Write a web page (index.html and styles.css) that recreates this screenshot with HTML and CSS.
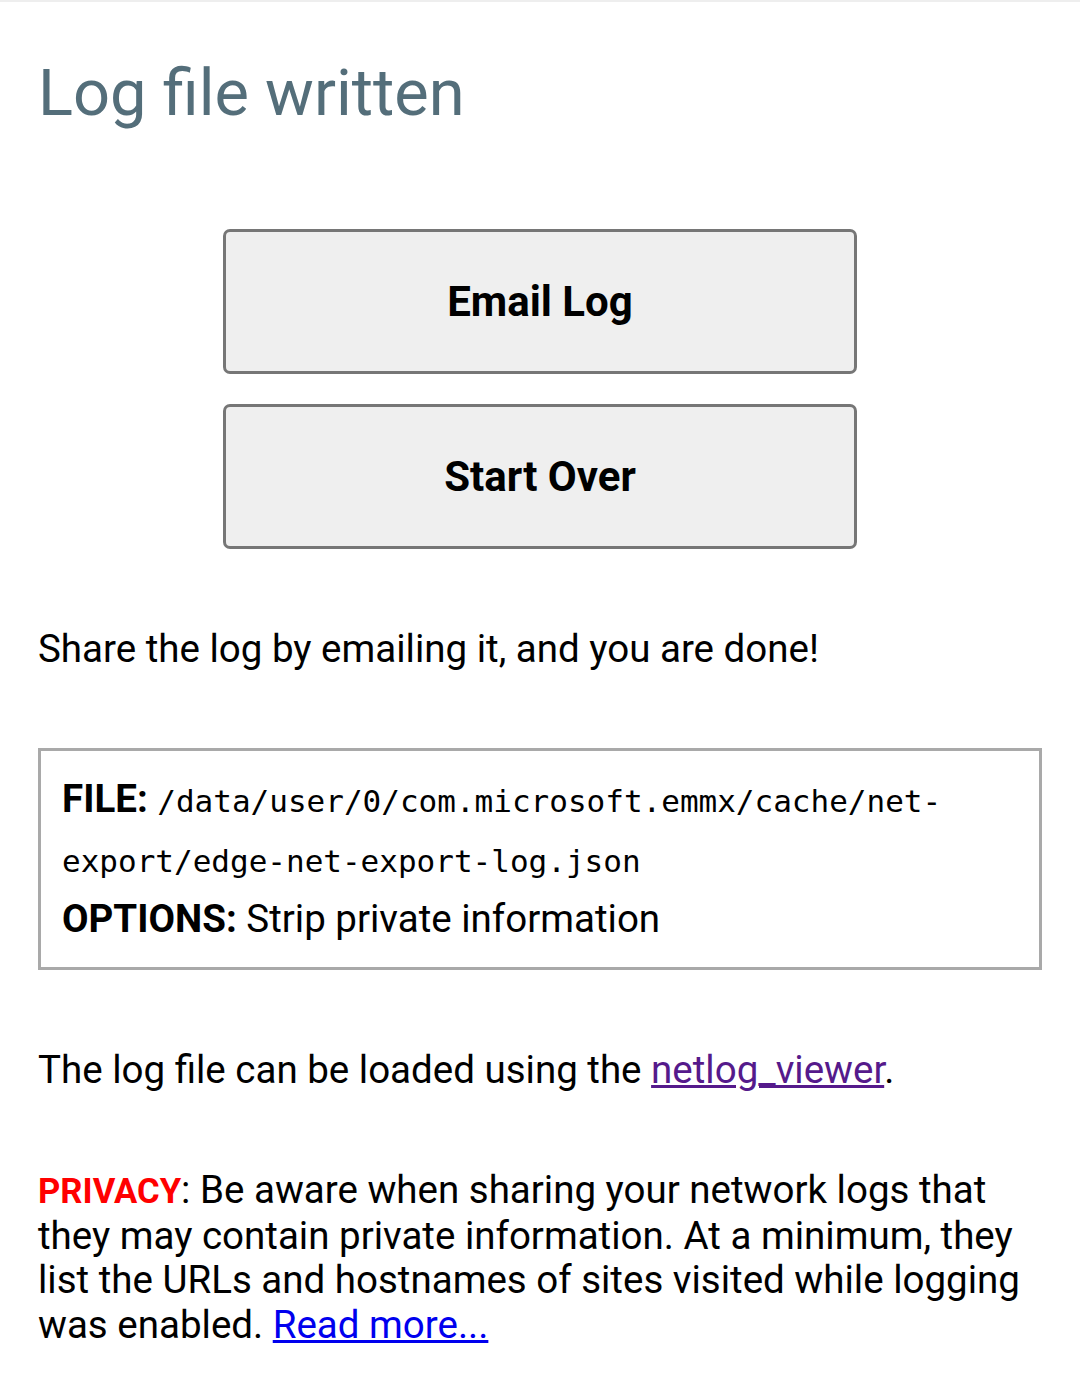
FILE: index.html
```html
<!DOCTYPE html>
<html>
<head>
<meta charset="utf-8">
<link rel="stylesheet" href="styles.css">
</head>
<body>
<main class="page">
  <h1 class="title">Log file written</h1>
  <div class="actions">
    <button class="btn">Email Log</button>
    <button class="btn">Start Over</button>
  </div>
  <p class="text share">Share the log by emailing it, and you are done!</p>
  <div class="info">
    <div class="info-row"><b>FILE:</b> <span class="mono">/data/user/0/com.microsoft.emmx/cache/net-export/edge-net-export-log.json</span></div>
    <div class="info-row"><b>OPTIONS:</b> Strip private information</div>
  </div>
  <p class="text viewer">The log file can be loaded using the <a class="visited" href="#">netlog_viewer</a>.</p>
  <p class="text privacy"><b class="warn">PRIVACY</b>: Be aware when sharing your network logs that they may contain private information. At a minimum, they list the URLs and hostnames of sites visited while logging was enabled. <a class="link" href="#">Read more...</a></p>
</main>
</body>
</html>
```

FILE: styles.css
```css
html, body {
  margin: 0;
  padding: 0;
  background: #ffffff;
}

body {
  font-family: Roboto, "Noto Sans", sans-serif;
  font-size: 38.5px;
  color: #000000;
  border-top: 2px solid #eeeeee;
}

.page {
  padding: 0 38px;
}

.title {
  margin: 53px 0 0 0;
  font-size: 65px;
  font-weight: 400;
  line-height: 77px;
  color: #546e7a;
}

.actions {
  margin-top: 97px;
  display: flex;
  flex-direction: column;
  align-items: center;
  gap: 30px;
}

.btn {
  width: 634px;
  height: 145px;
  box-sizing: border-box;
  background: #efefef;
  border: 3px solid #767676;
  border-radius: 7px;
  font-family: Roboto, "Noto Sans", sans-serif;
  font-size: 42px;
  font-weight: 700;
  color: #000000;
  padding: 0;
}

.text {
  margin: 0;
  line-height: normal;
}

.share {
  margin-top: 77px;
}

.info {
  margin-top: 77px;
  border: 3px solid #a9a9a9;
  padding: 19px 21px 19px 21px;
  line-height: 58px;
}

.info-row b {
  font-weight: 700;
}

.mono {
  font-family: "DejaVu Sans Mono", "Liberation Mono", monospace;
  font-size: 31px;
}

.viewer {
  margin-top: 77px;
}

.privacy {
  margin-top: 76px;
  line-height: 44.5px;
}

.warn {
  color: #ff0000;
  font-weight: 700;
  font-size: 0.9em;
}

.visited {
  color: #551a8b;
}

.link {
  color: #0000ee;
}
```
